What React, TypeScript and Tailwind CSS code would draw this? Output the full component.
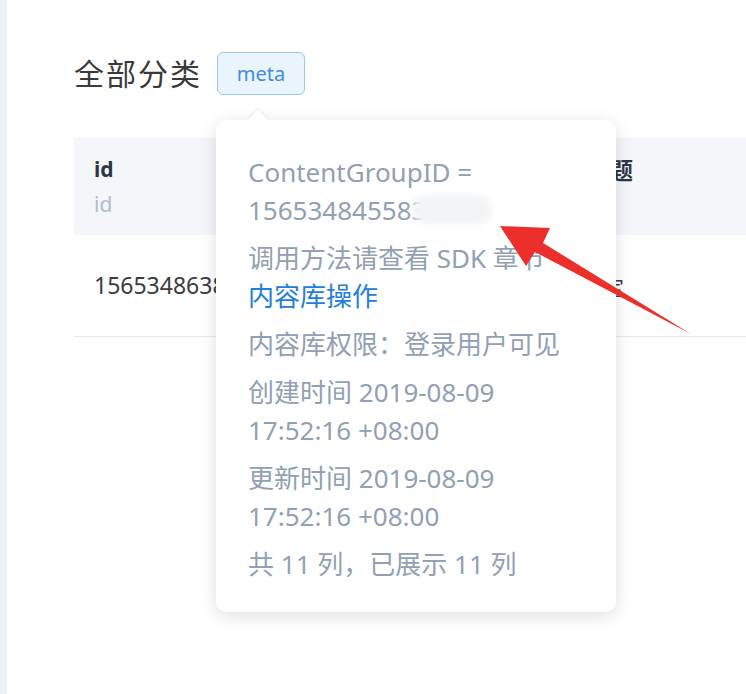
import React from "react";

const font = { fontFamily: '"Noto Sans", "Noto Sans CJK SC", sans-serif' };

/* Red annotation arrow drawn over the screenshot */
const RedArrow = () => (
  <svg
    className="absolute left-0 top-0 pointer-events-none"
    width="746"
    height="694"
    viewBox="0 0 746 694"
  >
    <polygon
      points="500,226 550,228 543,243 691,334 535,252 526,266"
      fill="#ec2f2a"
    />
  </svg>
);

const Popover = () => (
  <div className="absolute left-[216px] top-[120px] w-[400px] rounded-[10px] bg-white px-8 pt-[33px] pb-[29px] shadow-[0_4px_18px_rgba(0,0,0,0.13)]">
    {/* little caret pointing to the tag */}
    <div className="absolute left-[35px] -top-[7px] h-[14px] w-[14px] rotate-45 bg-white shadow-[-2px_-2px_4px_rgba(0,0,0,0.05)]" />
    <div className="relative flex flex-col gap-[10px] text-[26px] leading-[38px] text-[#91a0b3]">
      <div>
        <div>ContentGroupID =</div>
        <div className="flex items-center">
          <span>156534845583</span>
          <span className="-ml-[14px] inline-block h-[30px] w-[80px] rounded-full bg-[#f3f4f6] blur-[3px]" />
        </div>
      </div>
      <div>
        <div>调用方法请查看 SDK 章节</div>
        <div className="text-[#1e80d8]">内容库操作</div>
      </div>
      <div>内容库权限：登录用户可见</div>
      <div>
        <div>创建时间 2019-08-09</div>
        <div>17:52:16 +08:00</div>
      </div>
      <div>
        <div>更新时间 2019-08-09</div>
        <div>17:52:16 +08:00</div>
      </div>
      <div>共 11 列，已展示 11 列</div>
    </div>
  </div>
);

export default function App() {
  return (
    <div className="relative flex h-[694px] w-[746px] overflow-hidden bg-white" style={font}>
      <div className="w-[7px] shrink-0 bg-[#edf1f7]" />
      <div className="flex flex-1 flex-col pl-[67px] pt-[52px]">
        <div className="flex items-center gap-[15px]">
          <h1 className="text-[30px] leading-[43px] tracking-[2px] text-[#3a3a3a]">全部分类</h1>
          <span className="flex h-[43px] w-[88px] items-center justify-center rounded-[6px] border border-[#9cc8ef] bg-[#eaf4fd] text-[20px] text-[#3f8ee0]">
            meta
          </span>
        </div>

        <div className="mt-[43px] flex flex-col">
          <div className="grid h-[97px] grid-cols-[493px_1fr] bg-[#f4f6f9]">
            <div className="flex flex-col justify-center px-5 text-[21px] leading-[35px]">
              <span className="font-bold text-[#2c3645]">id</span>
              <span className="text-[#b5bcc6]">id</span>
            </div>
            <div className="flex items-start px-5 pt-[15px] text-[23px] font-bold leading-[35px] text-[#2c3645]">
              标题
            </div>
          </div>
          <div className="grid h-[102px] grid-cols-[493px_1fr] border-b border-[#e6e9ee]">
            <div className="flex items-center px-5 text-[23px] text-[#3c3c3c]">1565348638</div>
            <div />
          </div>
        </div>
      </div>

      <div className="absolute left-[582px] top-[272px] text-[21px] text-[#3c3c3c]">稳定</div>
      <Popover />
      <RedArrow />
    </div>
  );
}
